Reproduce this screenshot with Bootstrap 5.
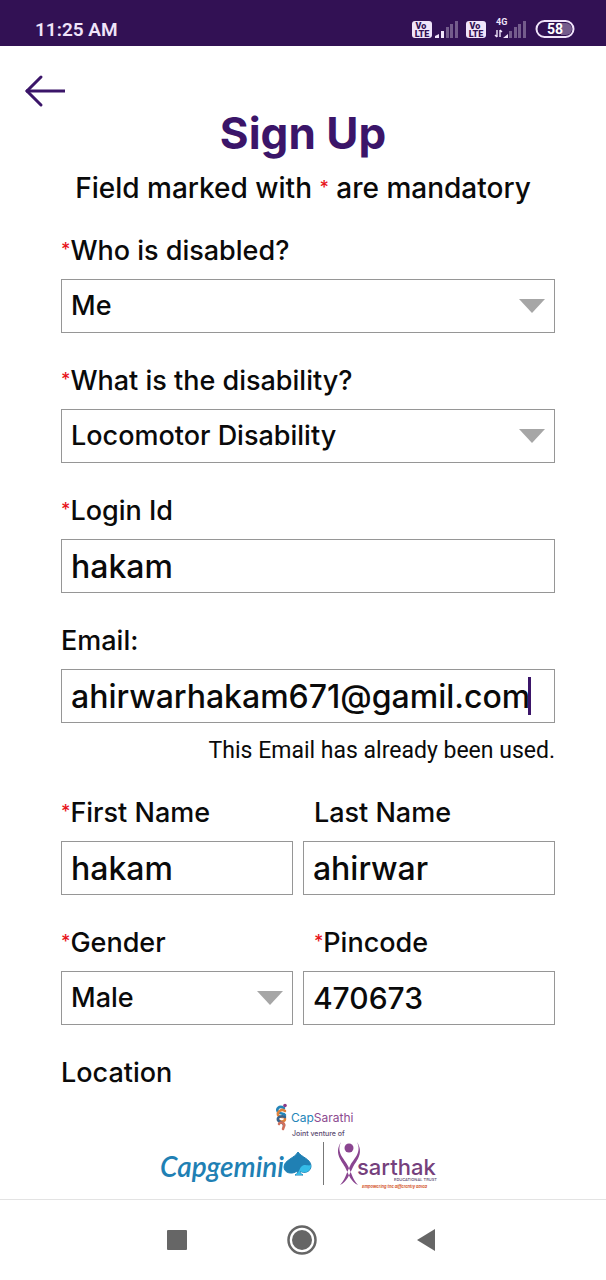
<!DOCTYPE html>
<html lang="en">
<head>
<meta charset="utf-8">
<meta name="viewport" content="width=device-width, initial-scale=1">
<title>Sign Up</title>
<link href="https://cdn.jsdelivr.net/npm/bootstrap@5.3.0/dist/css/bootstrap.min.css" rel="stylesheet">
<style>
  :root { --brand: #3b1569; --status: #321154; --line: #969696; }
  body { font-family: Inter, "Open Sans", sans-serif; font-weight: 500; color: #0a0a0a; background: #fff; }
  .status-bar { height: 46px; padding: 12px 31px 0 35px; background: var(--status); color: #f0e4fa; font-family: Roboto, sans-serif; }
  .status-time { font-size: 19px; line-height: 36px; font-weight: 600; }
  .status-icons { gap: 8px; height: 36px; }
  .top-row { padding: 26px 24px 0; height: 62px; }
  .back-btn { line-height: 0; color: var(--brand); }
  .page-title { font-size: 44px; line-height: 50px; font-weight: 700; color: var(--brand); }
  .hint { font-size: 28px; line-height: 36px; padding-top: 12px; }
  .req { color: #e8141c; font-size: 18px; line-height: 1; vertical-align: 4px; }
  .signup-form { padding: 27px 51px 0 61px; }
  .signup-form .form-label { display: block; font-size: 27px; line-height: 36px; margin-bottom: 10px; white-space: nowrap; }
  .signup-form .form-control, .signup-form .form-select {
    height: 54px; padding: 0 10px 0 9px; border: 1px solid var(--line); border-radius: 0;
    color: #0a0a0a; font-weight: 500; background-color: #fff; line-height: 52px;
  }
  .signup-form .form-control { font-size: 32px; }
  .signup-form .form-control.digits { font-size: 30px; }
  .signup-form .form-select {
    font-size: 27px; padding-right: 40px;
    background-image: url("data:image/svg+xml,%3Csvg xmlns='http://www.w3.org/2000/svg' viewBox='0 0 26 14'%3E%3Cpath d='M0 0h26L13 14z' fill='%23a6a6a6'/%3E%3C/svg%3E");
    background-size: 26px 14px; background-position: right 9px center;
  }
  .field { margin-bottom: 30px; }
  .pair { display: grid; grid-template-columns: 23fr 25fr; column-gap: 10px; }
  .pair .inset { padding-left: 11px; }
  .caret-mark { position: absolute; right: 24px; top: 8px; width: 3px; height: 38px; background: var(--brand); }
  .error-text { font-family: Roboto, sans-serif; font-weight: 400; font-size: 23px; line-height: 36px; margin-top: 10px; margin-bottom: 26px; }
  .partners { padding: 0 8px 8px 0; border-bottom: 1px solid #e3e3e3; }
  .sys-nav { height: 80px; padding: 0 165px; }
  .sys-nav .btn { line-height: 0; color: #666; }
</style>
</head>
<body class="min-vh-100 d-flex flex-column">
<header class="status-bar d-flex justify-content-between">
  <span class="status-time">11:25 AM</span>
  <svg class="flex-shrink-0" width="164" height="26" viewBox="411 12 164 26" font-family="Roboto, sans-serif" role="img" aria-label="Signal and battery">
    <g id="sim">
      <rect x="412" y="21" width="20" height="17" rx="3" fill="#f0e4fa"/>
      <g font-size="9" font-weight="900" fill="#321154" text-anchor="middle"><text x="421" y="29">Vo</text><text x="422" y="37">LTE</text></g>
    </g>
    <use href="#sim" x="54"/>
    <path d="M435 38v-2l4-2v4zM441 38v-7h3v7z" fill="#f0e4fa"/>
    <path d="M446 38V27h3v11zM450 38V24h3v14zM455 38V21h3v17z" fill="#745c8c"/>
    <text x="496" y="25" font-size="9" font-weight="700" fill="#f0e4fa">4G</text>
    <path d="M497 30v7m-2-2l2 2M500 37v-7m2 2l-2-2" fill="none" stroke="#f0e4fa" stroke-width="1.4"/>
    <path d="M503 38l5-4v4z" fill="#f0e4fa"/>
    <path d="M509 38v-7h3v7zM514 38V27h3v11zM518 38V24h3v14zM523 38V21h3v17z" fill="#745c8c"/>
    <rect x="536.5" y="21" width="37" height="16" rx="8" fill="none" stroke="#f0e4fa" stroke-width="2"/>
    <path d="M561 23h5a6 6 0 0 1 0 12h-5z" fill="#745c8c"/>
    <text x="555" y="34" font-size="14" font-weight="700" fill="#fff" text-anchor="middle">58</text>
  </svg>
</header>

<main class="flex-grow-1">
  <div class="top-row">
    <button class="btn p-0 border-0 back-btn" type="button" aria-label="Back">
      <svg width="42" height="36" viewBox="0 0 42 36" fill="none" stroke="currentColor" stroke-width="3"><path d="M2 19h39"/><path d="M17 5L3 19l14 14" stroke-linecap="round"/></svg>
    </button>
  </div>
  <h1 class="page-title text-center m-0">Sign Up</h1>
  <p class="hint text-center m-0">Field marked with <span class="req">*</span> are mandatory</p>

  <form class="signup-form">
    <div class="field">
      <label class="form-label" for="who"><span class="req">*</span>Who is disabled?</label>
      <select class="form-select" id="who"><option>Me</option></select>
    </div>
    <div class="field">
      <label class="form-label" for="disability"><span class="req">*</span>What is the disability?</label>
      <select class="form-select" id="disability"><option>Locomotor Disability</option></select>
    </div>
    <div class="field">
      <label class="form-label" for="login"><span class="req">*</span>Login Id</label>
      <input class="form-control" id="login" type="text" value="hakam">
    </div>
    <div>
      <label class="form-label" for="email">Email:</label>
      <div class="position-relative">
        <input class="form-control" id="email" type="email" value="ahirwarhakam671@gamil.com">
        <span class="caret-mark"></span>
      </div>
      <p class="error-text text-end">This Email has already been used.</p>
    </div>
    <div class="pair field">
      <div>
        <label class="form-label" for="first"><span class="req">*</span>First Name</label>
        <input class="form-control" id="first" type="text" value="hakam">
      </div>
      <div>
        <label class="form-label inset" for="last">Last Name</label>
        <input class="form-control" id="last" type="text" value="ahirwar">
      </div>
    </div>
    <div class="pair field">
      <div>
        <label class="form-label" for="gender"><span class="req">*</span>Gender</label>
        <select class="form-select" id="gender"><option>Male</option></select>
      </div>
      <div>
        <label class="form-label inset" for="pin"><span class="req">*</span>Pincode</label>
        <input class="form-control digits" id="pin" type="text" inputmode="numeric" value="470673">
      </div>
    </div>
    <div class="form-label">Location</div>
  </form>
</main>

<footer>
  <div class="partners d-flex justify-content-center">
    <svg width="280" height="90" viewBox="159 1102 280 90" role="img" aria-label="CapSarathi, joint venture of Capgemini and Sarthak">
      <g fill="none" stroke-linecap="round" stroke-width="2.500">
        <path d="M284 1109c-5-3-8 1-6 4 2 2 6 1 7 3" stroke="#2485b8"/>
        <path d="M285 1112c-3-3-8 1-7 4 2 4 7 0 7 4 0 3-5 3-7 1" stroke="#e0813a"/>
        <path d="M285 1118c-3-2-8 0-7 3s7 2 6 6" stroke="#35648f"/>
        <path d="M279 1125c1-3 6-1 5 2l-1 3" stroke="#d0705c"/>
      </g>
      <circle cx="285" cy="1106.500" r="1.800" fill="#8c3a86"/>
      <text x="291" y="1123" font-family="Inter, sans-serif" font-size="12" font-weight="400" fill="#2485b8">Cap<tspan fill="#8c4a90">Sarathi</tspan></text>
      <text x="292" y="1137" font-family="Inter, sans-serif" font-size="7" fill="#5a4a70">Joint venture of</text>
      <text x="160" y="1178" font-family="Lato, sans-serif" font-size="28" font-style="italic" font-weight="600" fill="#2080b4">Capgemini</text>
      <path d="M298 1153c3 5 13 7 13 14 0 6-7 8-11 5 0 2 1 3 3 4h-8c2-1 3-2 2-4-5 4-13 2-13-4 0-7 11-9 14-15z" fill="#2080b4" stroke="#2080b4"/>
      <path d="M311 1166c0 7-7 9-11 6 0 2 1 3 3 4h-8c5-2 4-9 9-10 3 0 5 1 7 0z" fill="#35bce8"/>
      <path d="M323.500 1143v43" stroke="#777" stroke-width="1"/>
      <circle cx="349" cy="1149" r="4.500" fill="#8a4590"/>
      <path d="M341 1143c-5 11 3 16 7 24 4 8 5 14 10 19-7-3-9-10-13-18-4-7-11-14-4-25zM357 1143c5 11-3 16-7 24-4 8-5 14-10 19 7-3 9-10 13-18 4-7 11-14 4-25z" fill="#8a4590"/>
      <text x="357" y="1176" font-family="Inter, sans-serif" font-size="22" font-weight="500" fill="#75407c">sarthak</text>
      <text x="394" y="1182" font-family="Inter, sans-serif" font-size="4" fill="#5a4a70">EDUCATIONAL TRUST</text>
      <text x="362" y="1189" font-family="Inter, sans-serif" font-size="4" font-weight="700" font-style="italic" fill="#d4562c">Empowering the differently abled</text>
    </svg>
  </div>
  <nav class="sys-nav d-flex justify-content-between align-items-center" aria-label="System">
    <button class="btn p-0 border-0" type="button" aria-label="Recent apps"><svg width="24" height="30" viewBox="0 0 24 30"><rect x="2" y="5" width="20" height="20" rx="1" fill="currentColor"/></svg></button>
    <button class="btn p-0 border-0" type="button" aria-label="Home"><svg width="30" height="30" viewBox="0 0 30 30"><circle cx="15" cy="15" r="13.500" fill="none" stroke="currentColor" stroke-width="2.500"/><circle cx="15" cy="15" r="10" fill="currentColor"/></svg></button>
    <button class="btn p-0 border-0" type="button" aria-label="Back"><svg width="26" height="30" viewBox="0 0 26 30"><path d="M20 4v22L2 15z" fill="currentColor"/></svg></button>
  </nav>
</footer>
<script src="https://cdn.jsdelivr.net/npm/bootstrap@5.3.0/dist/js/bootstrap.bundle.min.js"></script>
</body>
</html>
